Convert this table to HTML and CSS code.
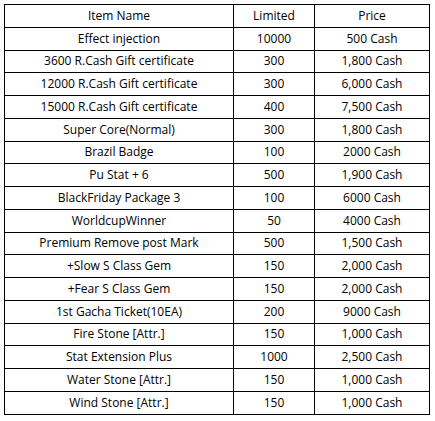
FILE: index.html
```html
<!DOCTYPE html>
<html>
<head>
<meta charset="utf-8">
<link rel="stylesheet" href="styles.css">
</head>
<body>
<table class="shop">
  <colgroup>
    <col class="c-name">
    <col class="c-limit">
    <col class="c-price">
  </colgroup>
  <tr><td>Item Name</td><td>Limited</td><td>Price</td></tr>
  <tr><td>Effect injection</td><td>10000</td><td>500 Cash</td></tr>
  <tr><td>3600 R.Cash Gift certificate</td><td>300</td><td>1,800 Cash</td></tr>
  <tr><td>12000 R.Cash Gift certificate</td><td>300</td><td>6,000 Cash</td></tr>
  <tr><td>15000 R.Cash Gift certificate</td><td>400</td><td>7,500 Cash</td></tr>
  <tr><td>Super Core(Normal)</td><td>300</td><td>1,800 Cash</td></tr>
  <tr><td>Brazil Badge</td><td>100</td><td>2000 Cash</td></tr>
  <tr><td>Pu Stat + 6</td><td>500</td><td>1,900 Cash</td></tr>
  <tr><td>BlackFriday Package 3</td><td>100</td><td>6000 Cash</td></tr>
  <tr><td>WorldcupWinner</td><td>50</td><td>4000 Cash</td></tr>
  <tr><td>Premium Remove post Mark</td><td>500</td><td>1,500 Cash</td></tr>
  <tr><td>+Slow S Class Gem</td><td>150</td><td>2,000 Cash</td></tr>
  <tr><td>+Fear S Class Gem</td><td>150</td><td>2,000 Cash</td></tr>
  <tr><td>1st Gacha Ticket(10EA)</td><td>200</td><td>9000 Cash</td></tr>
  <tr><td>Fire Stone [Attr.]</td><td>150</td><td>1,000 Cash</td></tr>
  <tr><td>Stat Extension Plus</td><td>1000</td><td>2,500 Cash</td></tr>
  <tr><td>Water Stone [Attr.]</td><td>150</td><td>1,000 Cash</td></tr>
  <tr><td>Wind Stone [Attr.]</td><td>150</td><td>1,000 Cash</td></tr>
</table>
</body>
</html>
```
FILE: styles.css
```css
html, body {
  margin: 0;
  padding: 0;
  background: #fff;
}
body {
  padding: 4px;
}
.shop {
  border-collapse: collapse;
  border: 1px solid #000;
  width: 425px;
  table-layout: fixed;
  font-family: "Open Sans", "Noto Sans CJK KR", sans-serif;
  font-size: 12px;
  color: #000;
}
.c-name { width: 229px; }
.c-limit { width: 81px; }
.c-price { width: 115px; }
.shop td {
  border: 1px solid #000;
  height: 21.75px;
  padding: 0;
  text-align: center;
  vertical-align: middle;
  line-height: 16px;
}
```
